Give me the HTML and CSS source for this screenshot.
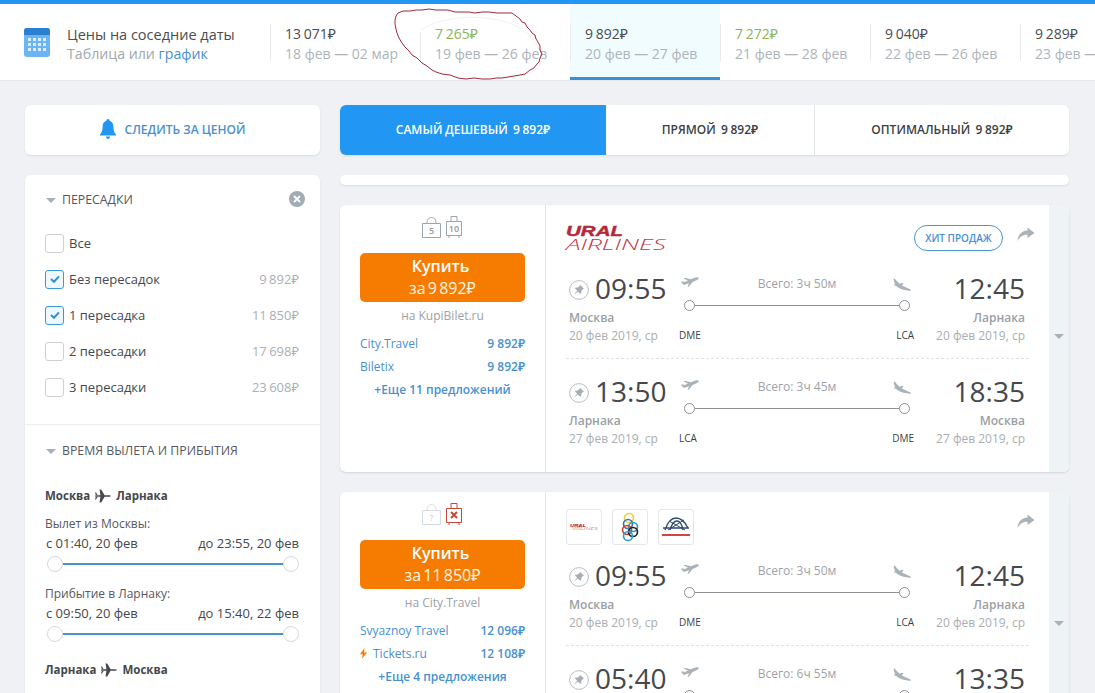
FILE: index.html
```html
<!DOCTYPE html>
<html lang="ru">
<head>
<meta charset="utf-8">
<title>Цены на соседние даты</title>
<link rel="stylesheet" href="styles.css">
</head>
<body>
<svg width="0" height="0" class="defs">
  <defs>
    <symbol id="plane-up" viewBox="0 0 18 14"><path transform="translate(0 1.500)" d="M17.800 1.600 C17.600 .6 15 .6 13 1.400 L9.600 2.800 L3.800 1.200 L2.600 1.800 L7 4.200 L3.600 5.600 L1.200 4.800 L.2 5.400 L2.200 8 C3 8.400 4.400 8.200 5.600 7.600 L8 6.800 L6.600 10.400 L8 10 L11.600 5.400 L16 3.400 C17 3 18 2.400 17.800 1.600 Z"/></symbol>
    <symbol id="plane-down" viewBox="0 0 18 14"><path d="M.6 .8 L1.600 .6 L4.200 3.600 L6.600 5.800 L9.400 4.800 L10.600 5.400 L8.800 7.200 L11 8.600 L17.600 11.600 L17.400 13 L10.600 11.800 C7 10.800 4.600 9.400 3.200 8 L.8 7.200 L1 6.400 L2.400 6.600 C1.400 4.800 .6 2.400 .6 .8 Z"/></symbol>
    <symbol id="pin" viewBox="0 0 20 20"><circle cx="10" cy="10" r="9.400" fill="#fff" stroke="#b7bcc2"/><path d="M11.200 5 L15 8.800 L13.800 9.300 L12.200 11 L12.200 13.200 L11.200 13.800 L8.800 11.400 L6 14 L5.600 13.600 L8.200 10.800 L6 8.600 L6.600 7.600 L8.800 7.600 L10.600 6 Z" fill="#a6adb4"/></symbol>
    <symbol id="share" viewBox="0 0 18 15"><path d="M10.500 0.500 L17.500 6 L10.500 11 L10.500 7.800 C6 7.800 3 9.600 0.500 14 C1 8.400 4 4 10.500 3.600 Z"/></symbol>
    <symbol id="plane-flat" viewBox="0 0 16 14"><path d="M0 7 C0 6.400 .6 6.200 1.400 6.200 L5.400 6.200 L4.600 .6 L6.200 .6 L9.600 6.200 L13.400 6.200 C15 6.200 16 6.600 16 7 C16 7.400 15 7.800 13.400 7.800 L9.600 7.800 L6.200 13.400 L4.600 13.400 L5.400 7.800 L1.400 7.800 C.6 7.800 0 7.600 0 7 Z M0 3.600 L1 3.600 L2.600 6 L0.800 6 Z M0 10.400 L1 10.400 L2.600 8 L0.800 8 Z"/></symbol>
  </defs>
</svg>

<header class="topbar">
  <div class="intro">
    <svg class="cal" viewBox="0 0 26 29" width="26" height="29"><rect width="26" height="29" rx="3" fill="#6db5f0"/><path d="M0 7V3a3 3 0 0 1 3-3h20a3 3 0 0 1 3 3v4z" fill="#2a7fd0"/><g fill="#d9ecfb"><rect x="4" y="10" width="3" height="3"/><rect x="9" y="10" width="3" height="3"/><rect x="14" y="10" width="3" height="3"/><rect x="19" y="10" width="3" height="3"/><rect x="4" y="15" width="3" height="3"/><rect x="9" y="15" width="3" height="3"/><rect x="14" y="15" width="3" height="3"/><rect x="19" y="15" width="3" height="3"/><rect x="4" y="20" width="3" height="3"/><rect x="9" y="20" width="3" height="3"/><rect x="14" y="20" width="3" height="3"/><rect x="19" y="20" width="3" height="3"/></g></svg>
    <div class="intro-text">
      <div class="intro-title">Цены на соседние даты</div>
      <div class="intro-sub">Таблица или <a>график</a></div>
    </div>
  </div>
  <div class="dates">
    <div class="date"><div class="date-price">13 071₽</div><div class="date-range">18 фев — 02 мар</div></div>
    <div class="date date-plain"><div class="date-price cheap">7 265₽</div><div class="date-range">19 фев — 26 фев</div></div>
    <div class="date date-active"><div class="date-price">9 892₽</div><div class="date-range">20 фев — 27 фев</div></div>
    <div class="date date-after"><div class="date-price cheap">7 272₽</div><div class="date-range">21 фев — 28 фев</div></div>
    <div class="date"><div class="date-price">9 040₽</div><div class="date-range">22 фев — 26 фев</div></div>
    <div class="date"><div class="date-price">9 289₽</div><div class="date-range">23 фев — 02 мар</div></div>
  </div>
  <svg class="scribble" viewBox="0 0 152 76" width="152" height="76"><path class="scribble-halo" d="M28 26 C45 12 90 9 118 20 C140 30 152 50 146 62 C135 72 120 74 108 74"/><path class="scribble-ink" d="M4 9 L9 7 L16 7 L22 6 L28 6 L35 5 L42 6 L48 6 L54 6 L61 8 L68 8 L75 8 L81 9 L88 8 L95 8 L103 9 L111 9 L118 9 L122 12 L126 15 L128 18 L131 19 L133 23 L136 26 L138 29 L141 31 L142 35 L144 38 L146 42 L146 46 L148 50 L146 54 L145 58 L143 60 L140 64 L136 66 L131 70 L126 71 L120 72 L114 73 L108 74 L102 74 L96 75 L88 75 L80 74 L72 75 L64 74 L56 71 L48 70 L42 68 L38 66 L33 62 L28 59 L23 54 L18 51 L15 47 L11 43 L8 39 L5 34 L3 29 L2 25 L1 20 L1 16 L2 12 Z"/></svg>
</header>

<main class="page">
  <aside class="side">
    <div class="watch">
      <svg class="bell" viewBox="0 0 16 20" width="16" height="20"><path d="M8 0 C9 0 9.600 .8 9.600 1.800 C12.400 2.600 13.400 5 13.400 8 C13.400 12 14.600 14 16 15.600 L16 16.600 L0 16.600 L0 15.600 C1.400 14 2.600 12 2.600 8 C2.600 5 3.600 2.600 6.400 1.800 C6.400 .8 7 0 8 0 Z M6 17.600 L10 17.600 C10 19 9 20 8 20 C7 20 6 19 6 17.600 Z" fill="#2196f3"/></svg>
      <span>СЛЕДИТЬ ЗА ЦЕНОЙ</span>
    </div>
    <div class="filters">
      <section class="fsec fsec-stops">
        <div class="fhead"><i class="tri"></i><span>ПЕРЕСАДКИ</span>
          <span class="fclose"><svg viewBox="0 0 8 8" width="8" height="8"><path d="M1 1L7 7M7 1L1 7" stroke="#fff" stroke-width="1.800"/></svg></span>
        </div>
        <div class="frow"><i class="cb"></i><span class="flabel">Все</span></div>
        <div class="frow"><i class="cb cb-on"><svg viewBox="0 0 10 8" width="10" height="8"><path d="M1 4L4 6.800L9 1.400" fill="none" stroke="#2e8fd6" stroke-width="2"/></svg></i><span class="flabel">Без пересадок</span><span class="fprice">9 892₽</span></div>
        <div class="frow"><i class="cb cb-on"><svg viewBox="0 0 10 8" width="10" height="8"><path d="M1 4L4 6.800L9 1.400" fill="none" stroke="#2e8fd6" stroke-width="2"/></svg></i><span class="flabel">1 пересадка</span><span class="fprice">11 850₽</span></div>
        <div class="frow"><i class="cb"></i><span class="flabel">2 пересадки</span><span class="fprice">17 698₽</span></div>
        <div class="frow"><i class="cb"></i><span class="flabel">3 пересадки</span><span class="fprice">23 608₽</span></div>
      </section>
      <section class="fsec fsec-time">
        <div class="fhead fhead-time"><i class="tri"></i><span>ВРЕМЯ ВЫЛЕТА И ПРИБЫТИЯ</span></div>
        <div class="froute">Москва <svg width="16" height="14"><use href="#plane-flat"/></svg> Ларнака</div>
        <div class="fcap">Вылет из Москвы:</div>
        <div class="frange"><span>с 01:40, 20 фев</span><span>до 23:55, 20 фев</span></div>
        <div class="slider"><i class="knob"></i><i class="track"></i><i class="knob"></i></div>
        <div class="fcap fcap-next">Прибытие в Ларнаку:</div>
        <div class="frange"><span>с 09:50, 20 фев</span><span>до 15:40, 22 фев</span></div>
        <div class="slider"><i class="knob"></i><i class="track"></i><i class="knob"></i></div>
        <div class="froute froute-next">Ларнака <svg width="16" height="14"><use href="#plane-flat"/></svg> Москва</div>
      </section>
    </div>
  </aside>

  <div class="content">
    <nav class="tabs">
      <div class="tab tab-a">САМЫЙ ДЕШЕВЫЙ&nbsp; 9 892₽</div>
      <div class="tab tab-b">ПРЯМОЙ&nbsp; 9 892₽</div>
      <div class="tab tab-c">ОПТИМАЛЬНЫЙ&nbsp; 9 892₽</div>
    </nav>
    <div class="stub"></div>

    <article class="ticket">
      <div class="buy">
        <div class="bags">
          <svg viewBox="0 0 42 24" width="42" height="24" fill="none" stroke="#9aa5ad"><path d="M1.500 8.500H19.500V22.500H1.500Z"/><path d="M6 8C6 4 8 2.500 10.500 2.500S15 4 15 8"/><path d="M25.500 6.500H40.500V20.500H25.500Z"/><path d="M30 6V1.500H36V6M28 21V23M38 21V23"/><text x="10.500" y="19" class="bagn">5</text><text x="33" y="17" class="bagn">10</text></svg>
        </div>
        <a class="buy-btn"><b>Купить</b><span>за 9 892₽</span></a>
        <div class="buy-on">на KupiBilet.ru</div>
        <div class="offer"><span>City.Travel</span><b>9 892₽</b></div>
        <div class="offer"><span>Biletix</span><b>9 892₽</b></div>
        <div class="more">+Еще 11 предложений</div>
      </div>
      <div class="info">
        <div class="info-top">
          <svg class="ural" viewBox="0 0 100 26" width="100" height="26"><text x="0" y="12" textLength="57" lengthAdjust="spacingAndGlyphs" class="ural-a">URAL</text><text x="0" y="25.500" textLength="100" lengthAdjust="spacingAndGlyphs" class="ural-b">AIRLINES</text></svg>
          <span class="hit">ХИТ ПРОДАЖ</span>
          <svg class="share" width="18" height="15"><use href="#share"/></svg>
        </div>
        <div class="leg">
          <div class="ep"><div class="tm"><svg width="20" height="20"><use href="#pin"/></svg><span>09:55</span></div><div class="city">Москва</div><div class="day">20 фев 2019, ср</div></div>
          <div class="route">
            <div class="r-top"><svg width="18" height="14"><use href="#plane-up"/></svg><span>Всего: 3ч 50м</span><svg width="18" height="14"><use href="#plane-down"/></svg></div>
            <div class="r-line"><i></i><b></b><i></i></div>
            <div class="r-codes"><span>DME</span><span>LCA</span></div>
          </div>
          <div class="ep ep-r"><div class="tm"><span>12:45</span></div><div class="city">Ларнака</div><div class="day">20 фев 2019, ср</div></div>
        </div>
        <div class="leg leg-2">
          <div class="ep"><div class="tm"><svg width="20" height="20"><use href="#pin"/></svg><span>13:50</span></div><div class="city">Ларнака</div><div class="day">27 фев 2019, ср</div></div>
          <div class="route">
            <div class="r-top"><svg width="18" height="14"><use href="#plane-up"/></svg><span>Всего: 3ч 45м</span><svg width="18" height="14"><use href="#plane-down"/></svg></div>
            <div class="r-line"><i></i><b></b><i></i></div>
            <div class="r-codes"><span>LCA</span><span>DME</span></div>
          </div>
          <div class="ep ep-r"><div class="tm"><span>18:35</span></div><div class="city">Москва</div><div class="day">27 фев 2019, ср</div></div>
        </div>
      </div>
      <div class="expand"><i class="tri"></i></div>
    </article>

    <article class="ticket">
      <div class="buy">
        <div class="bags">
          <svg viewBox="0 0 42 24" width="42" height="24" fill="none"><path d="M1.500 8.500H19.500V22.500H1.500Z" stroke="#d5dce1"/><path d="M6 8C6 4 8 2.500 10.500 2.500S15 4 15 8" stroke="#d5dce1"/><text x="10.500" y="19" class="bagn bagn-q">?</text><path d="M25.500 6.500H40.500V20.500H25.500Z" stroke="#c8473c"/><path d="M30 6V1.500H36V6M28 21V23M38 21V23" stroke="#c8473c"/><path d="M30 10L36 16M36 10L30 16" stroke="#c8473c" stroke-width="2"/></svg>
        </div>
        <a class="buy-btn"><b>Купить</b><span>за 11 850₽</span></a>
        <div class="buy-on">на City.Travel</div>
        <div class="offer"><span>Svyaznoy Travel</span><b>12 096₽</b></div>
        <div class="offer"><span><svg class="bolt" viewBox="0 0 7 11" width="7" height="11"><path d="M4.500 0L0 6.300H2.800L1.800 11L7 4.500H4Z" fill="#f57c00"/></svg>Tickets.ru</span><b>12 108₽</b></div>
        <div class="more">+Еще 4 предложения</div>
      </div>
      <div class="info">
        <div class="info-top">
          <span class="alogo"><svg viewBox="0 0 100 26" width="28" height="8"><text x="0" y="12" textLength="57" lengthAdjust="spacingAndGlyphs" class="ural-a">URAL</text><text x="0" y="25.500" textLength="100" lengthAdjust="spacingAndGlyphs" class="ural-b">AIRLINES</text></svg></span>
          <span class="alogo"><svg viewBox="0 0 20 30" width="20" height="30" fill="none" stroke-width="1.700"><circle cx="9" cy="6" r="4.500" stroke="#ecd23a"/><circle cx="8" cy="12" r="4.500" stroke="#3f6fc4"/><circle cx="13" cy="15" r="4.500" stroke="#27a0c8"/><circle cx="7" cy="18" r="4.500" stroke="#d5432f"/><circle cx="13" cy="20" r="4.500" stroke="#222"/><circle cx="8" cy="24" r="4.500" stroke="#2fa0d8"/></svg></span>
          <span class="alogo"><svg viewBox="0 0 30 22" width="30" height="22" fill="none"><path d="M4 14C7 5 11 2 15 2C20 2 24 6 27 12M9 14C11 7 13 5 16 5C19 5 21 9 22 14M2 12H28" stroke="#2c4a6e" stroke-width="1.300"/><path d="M8 5L24 14M23 4L7 14" stroke="#2c4a6e"/><path d="M1 19H29" stroke="#c8332b" stroke-width="1.800"/></svg></span>
          <svg class="share share-solo" width="18" height="15"><use href="#share"/></svg>
        </div>
        <div class="leg">
          <div class="ep"><div class="tm"><svg width="20" height="20"><use href="#pin"/></svg><span>09:55</span></div><div class="city">Москва</div><div class="day">20 фев 2019, ср</div></div>
          <div class="route">
            <div class="r-top"><svg width="18" height="14"><use href="#plane-up"/></svg><span>Всего: 3ч 50м</span><svg width="18" height="14"><use href="#plane-down"/></svg></div>
            <div class="r-line"><i></i><b></b><i></i></div>
            <div class="r-codes"><span>DME</span><span>LCA</span></div>
          </div>
          <div class="ep ep-r"><div class="tm"><span>12:45</span></div><div class="city">Ларнака</div><div class="day">20 фев 2019, ср</div></div>
        </div>
        <div class="leg leg-2">
          <div class="ep"><div class="tm"><svg width="20" height="20"><use href="#pin"/></svg><span>05:40</span></div><div class="city">Ларнака</div><div class="day">21 фев 2019, чт</div></div>
          <div class="route">
            <div class="r-top"><svg width="18" height="14"><use href="#plane-up"/></svg><span>Всего: 6ч 55м</span><svg width="18" height="14"><use href="#plane-down"/></svg></div>
            <div class="r-line"><i></i><b></b><i></i></div>
            <div class="r-codes"><span>LCA</span><span>DME</span></div>
          </div>
          <div class="ep ep-r"><div class="tm"><span>13:35</span></div><div class="city">Москва</div><div class="day">21 фев 2019, чт</div></div>
        </div>
      </div>
      <div class="expand"><i class="tri"></i></div>
    </article>
  </div>
</main>
</body>
</html>
```
FILE: styles.css
```css
* { box-sizing: border-box; }
html, body { margin: 0; height: 693px; overflow: hidden; }
body { background: #eff1f5; font-family: "Open Sans", "Noto Sans", sans-serif; font-size: 12px; color: #3c3f44; }
.defs { position: absolute; }
i { display: block; font-style: normal; }

/* top bar */
.topbar { position: relative; height: 80px; background: #fff; border-top: 4px solid #2196f3; display: flex; box-shadow: 0 1px 0 #e6e8ec; overflow: hidden; }
.intro { width: 270px; flex: none; display: flex; align-items: center; padding: 3px 0 0 24px; }
.cal { flex: none; margin: 0 17px 2px 0; }
.intro-title { font-size: 14.500px; line-height: 19px; color: #4a4d52; white-space: nowrap; }
.intro-sub { font-size: 14.200px; line-height: 19px; color: #a0a7ae; }
.intro-sub a { color: #4a90d0; }
.dates { display: flex; }
.date { width: 150px; flex: none; height: 76px; padding: 20px 0 0 15px; position: relative; }
.date::before { content: ""; position: absolute; left: 0; top: 20px; height: 37px; width: 1px; background: #e8eaed; }
.date-plain::before { top: 28px; height: 29px; }
.date-active { background: #f1fcff; border-bottom: 3px solid #3a90d4; }
.date-price { font-size: 14px; line-height: 20px; color: #4a4d52; word-spacing: -1px; }
.date-price.cheap { color: #8ab55a; }
.date-range { font-size: 14px; line-height: 20px; color: #aeb4ba; white-space: nowrap; }
.scribble { position: absolute; left: 394px; top: 0; fill: none; stroke-linejoin: round; }
.scribble-ink { stroke: #9e2b3c; stroke-width: 1; }
.scribble-halo { stroke: #f0f0f2; stroke-width: 1; }

/* page */
.page { display: flex; align-items: flex-start; padding: 25px 26px 0 25px; gap: 20px; }
.side { width: 295px; flex: none; display: flex; flex-direction: column; gap: 20px; }
.content { width: 729px; flex: none; }
.watch { height: 50px; background: #fff; border-radius: 6px; box-shadow: 0 1px 2px rgba(60,70,90,.12); display: flex; align-items: center; justify-content: center; gap: 9px; color: #4a90d0; font-size: 12px; font-weight: 600; padding: 0 0 2px 0; }
.filters { background: #fff; border-radius: 6px; box-shadow: 0 1px 2px rgba(60,70,90,.12); }
.fsec-stops { height: 250px; padding: 15px 21px 0 20px; border-bottom: 1px solid #eceef1; }
.fhead { display: flex; align-items: center; height: 18px; font-size: 12.300px; color: #55585d; margin-bottom: 17px; }
.tri { width: 0; height: 0; border-left: 5px solid transparent; border-right: 5px solid transparent; border-top: 5px solid #a6b1b9; }
.fhead .tri { margin: 2px 6px 0 1px; }
.fclose { margin-left: auto; margin-right: -6px; width: 16px; height: 16px; border-radius: 50%; background: #a0adb6; display: flex; align-items: center; justify-content: center; }
.frow { display: flex; align-items: center; height: 36px; font-size: 12px; }
.cb { width: 19px; height: 19px; border: 1px solid #cdd1d6; border-radius: 3px; margin-right: 5px; display: flex; align-items: center; justify-content: center; background: #fff; }
.cb-on { border-color: #3a9ad9; background: #eef8fe; }
.flabel { color: #45484d; font-size: 13px; }
.fprice { margin-left: auto; color: #abb0b5; font-size: 13px; word-spacing: -1px; }
.fsec-time { padding: 16px 21px 60px 20px; }
.fhead-time { margin-bottom: 0; }
.froute { font-weight: 700; font-size: 11.500px; line-height: 16px; color: #45484d; display: flex; align-items: center; gap: 5px; margin-top: 29px; }
.froute svg { fill: #45484d; }
.froute-next { margin-top: 20px; }
.fcap { font-size: 12px; line-height: 18px; margin-top: 11px; color: #55585d; }
.fcap-next { margin-top: 13px; }
.frange { display: flex; justify-content: space-between; font-size: 13px; line-height: 18px; color: #45484d; padding-left: 1px; margin-top: 1px; }
.slider { display: flex; align-items: center; height: 16px; margin: 4px 0 0 2px; width: 252px; }
.knob { width: 16px; height: 16px; flex: none; border-radius: 50%; background: #fff; border: 1px solid #d5d9dd; }
.track { flex: 1; height: 2px; background: #4797c0; }

/* tabs */
.tabs { display: flex; height: 50px; background: #fff; border-radius: 6px; box-shadow: 0 1px 2px rgba(60,70,90,.12); overflow: hidden; }
.tab { display: flex; align-items: center; justify-content: center; font-size: 12px; font-weight: 600; color: #3c3f44; word-spacing: -.5px; padding-bottom: 2px; }
.tab-a { width: 266px; background: #2196f3; color: #fff; }
.tab-b { width: 209px; border-right: 1px solid #e3e5e9; }
.tab-c { flex: 1; }
.stub { height: 10px; margin-top: 20px; background: #fff; border-radius: 5px; box-shadow: 0 1px 2px rgba(60,70,90,.12); }

/* ticket */
.ticket { display: flex; height: 267px; margin-top: 20px; background: #fff; border-radius: 6px; box-shadow: 0 1px 2px rgba(60,70,90,.16); overflow: hidden; }
.buy { width: 206px; flex: none; border-right: 1px solid #e3e5e9; padding: 10px 20px 0; }
.bags { display: flex; justify-content: center; height: 26px; padding-right: 2px; margin-bottom: 12px; }
.bagn { font: 600 9px "Open Sans", sans-serif; fill: #8f9aa2; stroke: none; text-anchor: middle; }
.bagn-q { fill: #cfd6db; }
.buy-btn { display: flex; flex-direction: column; align-items: center; justify-content: center; height: 49px; padding: 0 4px 2px 0; border-radius: 5px; background: #f57c00; color: #fff; font-size: 16px; line-height: 22px; }
.buy-btn b { font-weight: 600; }
.buy-btn span { word-spacing: -2px; color: #fff3e0; margin-left: 4px; }
.buy-on { text-align: center; color: #9da2a7; font-size: 12px; line-height: 18px; margin: 5px 0 7px; }
.offer { display: flex; justify-content: space-between; align-items: center; height: 23px; font-size: 12px; color: #4a90d0; }
.offer b { font-weight: 600; }
.bolt { margin-right: 6px; vertical-align: -1px; }
.more { text-align: center; font-weight: 600; font-size: 12px; line-height: 23px; color: #4a90d0; }

.info { flex: 1; min-width: 0; padding: 0 20px; }
.info-top { height: 65px; padding-top: 17px; display: flex; align-items: flex-start; position: relative; }
.ural { margin-top: 2px; overflow: visible; }
.ural-a { font: italic 700 14.500px "Liberation Sans", sans-serif; fill: #b5283a; stroke: #b5283a; stroke-width: .4; }
.ural-b { font: italic 300 14px "Open Sans", sans-serif; fill: #c0394a; }
.hit { margin-left: auto; margin-top: 3px; height: 26px; width: 89px; border: 1px solid #4797c9; border-radius: 13px; color: #4a90d0; font-size: 10px; font-weight: 600; display: flex; align-items: center; justify-content: center; white-space: nowrap; }
.share { margin: 5px -6px 0 14px; fill: #a9b3b9; }
.share-solo { margin-left: auto; margin-top: 5px; }
.alogo { width: 36px; height: 36px; border: 1px solid #e4e6e9; border-radius: 3px; display: flex; align-items: center; justify-content: center; margin-right: 10px; flex: none; }

.leg { display: flex; height: 89px; border-bottom: 1px dashed #dfe2e5; padding-left: 3px; }
.leg-2 { border-bottom: 0; padding-top: 14px; height: 103px; }
.ep { width: 111px; flex: none; }
.tm { display: flex; align-items: center; height: 39px; padding-bottom: 4px; gap: 6px; font-size: 28px; color: #45484d; }
.tm svg { margin-top: 4px; flex: none; }
.city { font-size: 12px; font-weight: 600; line-height: 18px; color: #9a9fa5; }
.day { font-size: 12px; line-height: 18px; color: #a9aeb3; }
.ep-r { text-align: right; padding-right: 4px; width: 114px; }
.ep-r .tm { justify-content: flex-end; }
.route { width: 235px; flex: none; }
.r-top { display: flex; justify-content: space-between; align-items: flex-start; height: 30px; font-size: 12px; color: #9ea3a8; padding: 5px 4px 0 1px; }
.r-top span { line-height: 14px; padding-top: 2px; margin-left: 2px; }
.r-top svg { fill: #a9b3b9; flex: none; }
.r-top svg:last-child { margin-top: 3px; }
.r-line { display: flex; align-items: center; height: 11px; padding: 0 5px 0 4px; }
.r-line i { width: 11px; height: 11px; border-radius: 50%; border: 1px solid #8d9094; background: #fff; flex: none; }
.r-line b { flex: 1; height: 1px; background: #8d9094; }
.r-codes { display: flex; justify-content: space-between; font-size: 10px; font-weight: 500; line-height: 18px; color: #3c3f44; margin: 15px 1px 0 -1px; }
.expand { width: 20px; flex: none; background: #eef3f5; display: flex; align-items: center; justify-content: center; padding-bottom: 5px; }
```
